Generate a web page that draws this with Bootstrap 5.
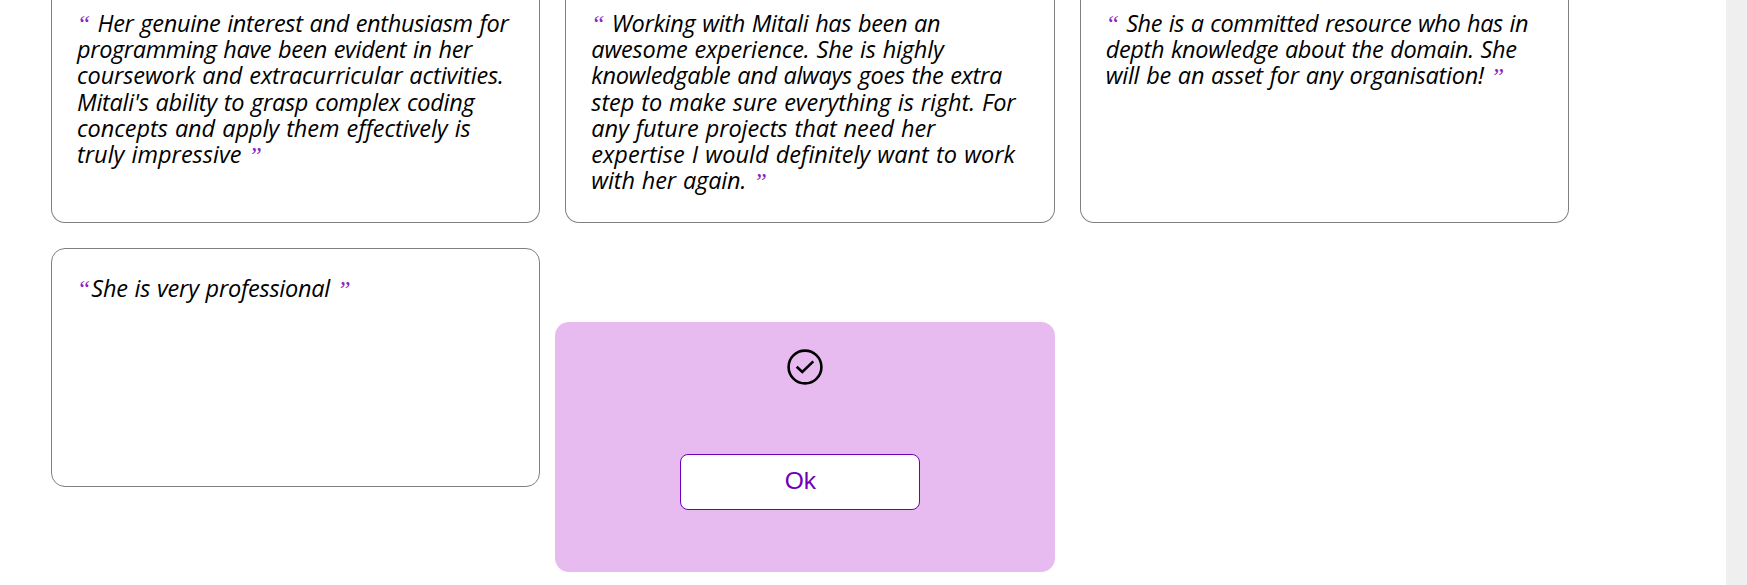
<!DOCTYPE html>
<html lang="en"><head><meta charset="utf-8"><meta name="viewport" content="width=device-width, initial-scale=1"><title>Testimonials</title>
<link href="https://cdn.jsdelivr.net/npm/bootstrap@5.3.0/dist/css/bootstrap.min.css" rel="stylesheet">
<style>
body{height:585px;background:#fff;color:#000}
.page-edge{width:21px;background:#efefef}
.quotes{display:grid;grid-template-columns:repeat(3,489.33px);grid-template-rows:223px 239px;gap:25px;padding-left:51px}
.quote-card{border:1px solid #808080;border-radius:14px;padding:26px 0 0 25px;font:italic 23.5px/26.2px "Trebuchet MS","Open Sans","Noto Sans",sans-serif}
.quote-card.cut{border-top:0;border-radius:0 0 14px 14px;padding-top:10px}
.ln{display:block;white-space:nowrap;height:26.2px}
.said{letter-spacing:var(--ls);word-spacing:1px}
.qm{font-family:"Liberation Serif",serif;color:#8a22c4;font-size:24px;line-height:1}
.qm.gap-after{margin-right:1px}
.qm.gap-before{margin-left:1px}
.popup{width:500px;height:250px;margin:74px 0 0 -10px;background:#e8bbf0;border-radius:14px;padding-top:27px}
.ok-btn{width:240px;height:56px;margin:69px 0 0 125px;padding:0 0 2px;border:1px solid #7000b8;border-radius:8px;background:#fff;color:#7000b8;font:24.5px "Liberation Sans",Arial,sans-serif}
</style></head><body class="d-flex overflow-hidden">
<main class="flex-grow-1"><div class="quotes">
<div class="quote-card cut">
<span class="ln"><span class="qm gap-after">“</span> <span class="said" style="--ls:-.30px">Her genuine interest and enthusiasm for</span></span>
<span class="ln"><span class="said" style="--ls:-.36px">programming have been evident in her</span></span>
<span class="ln"><span class="said" style="--ls:-.11px">coursework and extracurricular activities.</span></span>
<span class="ln"><span class="said" style="--ls:-.26px">Mitali's ability to grasp complex coding</span></span>
<span class="ln"><span class="said" style="--ls:-.05px">concepts and apply them effectively is</span></span>
<span class="ln"><span class="said" style="--ls:.02px">truly impressive</span> <span class="qm gap-before">”</span></span></div>
<div class="quote-card cut">
<span class="ln"><span class="qm gap-after">“</span> <span class="said" style="--ls:-.31px">Working with Mitali has been an</span></span>
<span class="ln"><span class="said" style="--ls:-.17px">awesome experience. She is highly</span></span>
<span class="ln"><span class="said" style="--ls:-.32px">knowledgable and always goes the extra</span></span>
<span class="ln"><span class="said" style="--ls:-.07px">step to make sure everything is right. For</span></span>
<span class="ln"><span class="said" style="--ls:-.06px">any future projects that need her</span></span>
<span class="ln"><span class="said" style="--ls:.03px">expertise I would definitely want to work</span></span>
<span class="ln"><span class="said" style="--ls:-.13px">with her again.</span> <span class="qm gap-before">”</span></span></div>
<div class="quote-card cut">
<span class="ln"><span class="qm gap-after">“</span> <span class="said" style="--ls:-.40px">She is a committed resource who has in</span></span>
<span class="ln"><span class="said" style="--ls:-.33px">depth knowledge about the domain. She</span></span>
<span class="ln"><span class="said" style="--ls:-.24px">will be an asset for any organisation!</span> <span class="qm gap-before">”</span></span></div>
<div class="quote-card"><span class="ln"><span class="qm gap-after">“</span><span class="said" style="--ls:-.24px">She is very professional</span> <span class="qm gap-before">”</span></span></div>
<div class="popup"><svg class="d-block mx-auto" width="36" height="36" viewBox="0 0 36 36" fill="none" stroke="#000" stroke-width="2.6" aria-hidden="true"><circle cx="18" cy="18" r="16.4"/><path d="M9.7 17.7l5.6 5.3 11-10.6"/></svg><button type="button" class="ok-btn d-block">Ok</button></div>
</div></main><aside class="page-edge"></aside>
<script src="https://cdn.jsdelivr.net/npm/bootstrap@5.3.0/dist/js/bootstrap.bundle.min.js"></script>
</body></html>
